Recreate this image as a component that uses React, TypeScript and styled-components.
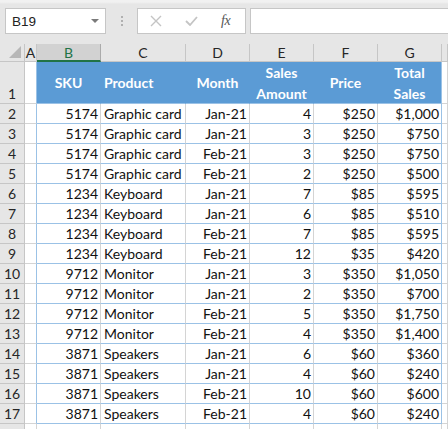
import React from "react";
import styled, { createGlobalStyle, css } from "styled-components";

const GlobalStyle = createGlobalStyle`
  html, body { margin: 0; padding: 0; background: #ffffff; }
  body { overflow: hidden; }
  #root { width: 448px; height: 429px; overflow: hidden; }
`;

const FONT = `Lato, "Liberation Sans", Arial, sans-serif`;

const Page = styled.div`
  width: 448px;
  height: 429px;
  overflow: hidden;
  background: #e6e6e6;
  font-family: ${FONT};
`;

const FormulaBar = styled.div`
  height: 44px;
  box-sizing: border-box;
  padding: 8px 0 0 5px;
  display: flex;
  align-items: flex-start;
  background: linear-gradient(#f1f1f1 0px, #f1f1f1 2px, #e6e6e6 4px);
`;

const Box = styled.div<{ $w?: number }>`
  height: 26px;
  box-sizing: border-box;
  background: #ffffff;
  border: 1px solid #c6c6c6;
  ${(p) => (p.$w ? css`width: ${p.$w}px; flex: none;` : css`flex: 1; border-right: none;`)}
  display: flex;
  align-items: center;
  position: relative;
`;

const NameText = styled.span`
  font-family: "Liberation Sans", Arial, sans-serif;
  font-size: 13.5px;
  color: #222;
  padding-left: 6px;
  flex: 1;
`;

const DropArrow = styled.span`
  width: 0;
  height: 0;
  border-left: 4px solid transparent;
  border-right: 4px solid transparent;
  border-top: 4px solid #7a7a7a;
  margin-right: 6px;
`;

const Grip = styled.div`
  width: 31px;
  flex: none;
  height: 26px;
  display: flex;
  flex-direction: column;
  align-items: center;
  justify-content: center;
  gap: 2px;
`;

const GripDot = styled.span`
  width: 2px;
  height: 2px;
  background: #b0b0b0;
`;

const FxButtons = styled.div`
  display: flex;
  align-items: center;
  width: 100%;
  height: 100%;
  padding-left: 12px;
  gap: 23px;
`;

const Fx = styled.span`
  font-family: "Liberation Serif", "Times New Roman", serif;
  font-style: italic;
  font-size: 14px;
  color: #555;
  letter-spacing: -0.5px;
`;

const Gap = styled.div<{ $w: number }>`
  width: ${(p) => p.$w}px;
  flex: none;
`;

const Sheet = styled.div`
  display: grid;
  grid-template-columns: 25px 12px 64px 85px 64px 64px 64px 64px 1fr;
  grid-template-rows: 18px 42px repeat(17, 20px);
  background: #ffffff;
`;

const Corner = styled.div`
  background: #e6e6e6;
  border-right: 1px solid #c6c6c6;
  border-bottom: 1px solid #c6c6c6;
  box-sizing: border-box;
  position: relative;
  &::after {
    content: "";
    position: absolute;
    right: 3px;
    bottom: 3px;
    width: 0;
    height: 0;
    border-left: 12px solid transparent;
    border-bottom: 12px solid #b7b7b7;
  }
`;

const ColHeader = styled.div<{ $selected?: boolean }>`
  box-sizing: border-box;
  background: ${(p) => (p.$selected ? "#d2d2d2" : "#e6e6e6")};
  color: ${(p) => (p.$selected ? "#217346" : "#262626")};
  border-right: 1px solid ${(p) => (p.$selected ? "#ababab" : "#c6c6c6")};
  border-bottom: ${(p) => (p.$selected ? "2px solid #217346" : "1px solid #c6c6c6")};
  font-size: 14px;
  display: flex;
  align-items: center;
  justify-content: center;
  padding-top: ${(p) => (p.$selected ? "1px" : "0")};
`;

const RowHeader = styled.div`
  box-sizing: border-box;
  background: #e6e6e6;
  color: #262626;
  border-right: 1px solid #c6c6c6;
  border-bottom: 1px solid #c6c6c6;
  font-size: 14px;
  display: flex;
  align-items: flex-end;
  justify-content: center;
  padding-bottom: 1px;
`;

const Cell = styled.div<{ $align?: "left" | "right"; $edge?: "left" | "right" | "none" }>`
  box-sizing: border-box;
  border-bottom: 1px solid #9bc2e6;
  border-right: 1px solid ${(p) => (p.$edge === "right" || p.$edge === "left" ? "#9bc2e6" : "#d4d4d4")};
  font-size: 14px;
  color: #111;
  display: flex;
  align-items: flex-end;
  justify-content: ${(p) => (p.$align === "left" ? "flex-start" : "flex-end")};
  padding: 0 2px 1px 3px;
  white-space: nowrap;
  overflow: visible;
`;

const BlankCell = styled.div<{ $edge?: boolean }>`
  box-sizing: border-box;
  border-right: 1px solid ${(p) => (p.$edge ? "#9bc2e6" : "#d4d4d4")};
  border-bottom: 1px solid #d4d4d4;
`;

const HeaderCell = styled.div<{ $align?: "left" | "center" }>`
  box-sizing: border-box;
  background: #5b9bd5;
  color: #ffffff;
  font-weight: 700;
  font-size: 14px;
  line-height: 21px;
  border-bottom: 1px solid #9bc2e6;
  border-right: 1px solid #5b9bd5;
  display: flex;
  align-items: center;
  justify-content: ${(p) => (p.$align === "left" ? "flex-start" : "center")};
  text-align: ${(p) => (p.$align === "left" ? "left" : "center")};
  padding: 0 3px;
`;

const HeaderLast = styled(HeaderCell)`
  border-right: 1px solid #9bc2e6;
`;

type Row = [string, string, string, number, string, string];

const rows: Row[] = [
  ["5174", "Graphic card", "Jan-21", 4, "$250", "$1,000"],
  ["5174", "Graphic card", "Jan-21", 3, "$250", "$750"],
  ["5174", "Graphic card", "Feb-21", 3, "$250", "$750"],
  ["5174", "Graphic card", "Feb-21", 2, "$250", "$500"],
  ["1234", "Keyboard", "Jan-21", 7, "$85", "$595"],
  ["1234", "Keyboard", "Jan-21", 6, "$85", "$510"],
  ["1234", "Keyboard", "Feb-21", 7, "$85", "$595"],
  ["1234", "Keyboard", "Feb-21", 12, "$35", "$420"],
  ["9712", "Monitor", "Jan-21", 3, "$350", "$1,050"],
  ["9712", "Monitor", "Jan-21", 2, "$350", "$700"],
  ["9712", "Monitor", "Feb-21", 5, "$350", "$1,750"],
  ["9712", "Monitor", "Feb-21", 4, "$350", "$1,400"],
  ["3871", "Speakers", "Jan-21", 6, "$60", "$360"],
  ["3871", "Speakers", "Jan-21", 4, "$60", "$240"],
  ["3871", "Speakers", "Feb-21", 10, "$60", "$600"],
  ["3871", "Speakers", "Feb-21", 4, "$60", "$240"],
];

const CrossIcon = () => (
  <svg width="12" height="12" viewBox="0 0 12 12">
    <path d="M1 1 L11 11 M11 1 L1 11" stroke="#c4c4c4" strokeWidth="1.4" fill="none" />
  </svg>
);

const CheckIcon = () => (
  <svg width="13" height="10" viewBox="0 0 13 10">
    <path d="M1 5 L5 9 L12 1" stroke="#c4c4c4" strokeWidth="1.8" fill="none" />
  </svg>
);

export default function App() {
  return (
    <Page>
      <GlobalStyle />
      <FormulaBar>
        <Box $w={101}>
          <NameText>B19</NameText>
          <DropArrow />
        </Box>
        <Grip>
          <GripDot />
          <GripDot />
          <GripDot />
        </Grip>
        <Box $w={109}>
          <FxButtons>
            <CrossIcon />
            <CheckIcon />
            <Fx>fx</Fx>
          </FxButtons>
        </Box>
        <Gap $w={4} />
        <Box />
      </FormulaBar>
      <Sheet>
        <Corner />
        <ColHeader>A</ColHeader>
        <ColHeader $selected>B</ColHeader>
        <ColHeader>C</ColHeader>
        <ColHeader>D</ColHeader>
        <ColHeader>E</ColHeader>
        <ColHeader>F</ColHeader>
        <ColHeader>G</ColHeader>
        <ColHeader />

        <RowHeader>1</RowHeader>
        <BlankCell $edge />
        <HeaderCell>SKU</HeaderCell>
        <HeaderCell $align="left">Product</HeaderCell>
        <HeaderCell>Month</HeaderCell>
        <HeaderCell>
          Sales
          <br />
          Amount
        </HeaderCell>
        <HeaderCell>Price</HeaderCell>
        <HeaderLast>
          Total
          <br />
          Sales
        </HeaderLast>
        <BlankCell />

        {rows.map((r, i) => (
          <React.Fragment key={i}>
            <RowHeader>{i + 2}</RowHeader>
            <BlankCell $edge />
            <Cell>{r[0]}</Cell>
            <Cell $align="left">{r[1]}</Cell>
            <Cell>{r[2]}</Cell>
            <Cell>{r[3]}</Cell>
            <Cell>{r[4]}</Cell>
            <Cell $edge="right">{r[5]}</Cell>
            <BlankCell />
          </React.Fragment>
        ))}

        <RowHeader />
        <BlankCell />
        <BlankCell />
        <BlankCell />
        <BlankCell />
        <BlankCell />
        <BlankCell />
        <BlankCell />
        <BlankCell />
      </Sheet>
    </Page>
  );
}
